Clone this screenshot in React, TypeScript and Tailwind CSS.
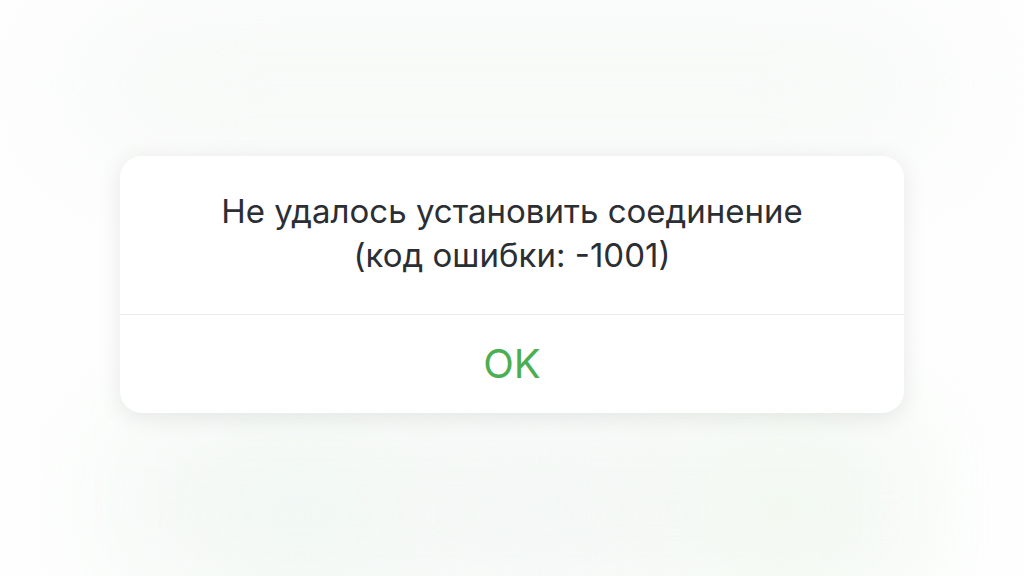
const App = () => {
  return (
    <div className="relative h-[576px] w-[1024px] overflow-hidden bg-[#fdfefd] font-['Inter','Noto_Sans',sans-serif]">
      {/* faint blurred app behind the alert */}
      <div className="pointer-events-none absolute inset-0">
        <div className="absolute left-[80px] top-[30px] h-[110px] w-[860px] rounded-[60px] bg-[#f5f7f6] blur-3xl" />
        <div className="absolute left-[100px] top-[410px] h-[176px] w-[820px] rounded-[40px] bg-[#f7faf8] blur-2xl" />
        <div className="absolute left-[200px] top-[440px] h-[150px] w-[200px] rounded-full bg-[#eff7f2] blur-3xl" />
        <div className="absolute left-[470px] top-[440px] h-[150px] w-[150px] rounded-full bg-[#f1f6f4] blur-3xl" />
        <div className="absolute left-[700px] top-[430px] h-[160px] w-[160px] rounded-full bg-[#eff8ec] blur-3xl" />
      </div>

      <div className="relative flex h-full items-start justify-center pt-[156px]">
        <div className="flex w-[784px] flex-col rounded-[22px] bg-white shadow-[0_4px_24px_rgba(0,0,0,0.09)]">
          <div className="flex h-[158px] flex-col items-center justify-center pb-[4px] text-center text-[33px] leading-[44px] text-[#2b2e33]">
            <p>Не удалось установить соединение</p>
            <p>(код ошибки: -1001)</p>
          </div>
          <div className="h-px bg-[#e8eaec]" />
          <button className="flex h-[98px] items-center justify-center text-[40px] text-[#4cae52]">
            OK
          </button>
        </div>
      </div>
    </div>
  );
};

export default App;
